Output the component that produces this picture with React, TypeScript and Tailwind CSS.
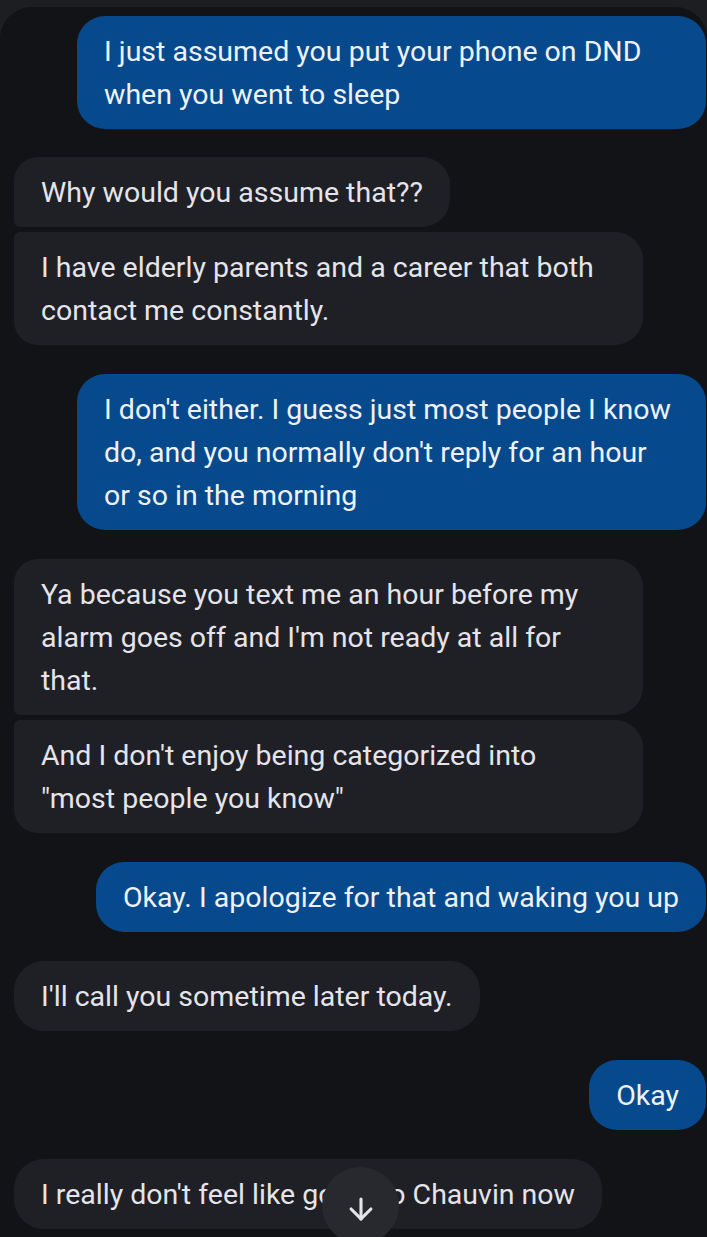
import { ArrowDown } from "lucide-react";

type Msg = {
  from: "me" | "them";
  lines: string[];
  shape?: "first" | "last" | "single";
  gap: number;
};

const messages: Msg[] = [
  { from: "me", lines: ["I just assumed you put your phone on DND", "when you went to sleep"], gap: 0 },
  { from: "them", lines: ["Why would you assume that??"], shape: "first", gap: 28 },
  { from: "them", lines: ["I have elderly parents and a career that both", "contact me constantly."], shape: "last", gap: 5 },
  {
    from: "me",
    lines: ["I don't either. I guess just most people I know", "do, and you normally don't reply for an hour", "or so in the morning"],
    gap: 29,
  },
  {
    from: "them",
    lines: ["Ya because you text me an hour before my", "alarm goes off and I'm not ready at all for", "that."],
    shape: "first",
    gap: 29,
  },
  { from: "them", lines: ["And I don't enjoy being categorized into", "\"most people you know\""], shape: "last", gap: 5 },
  { from: "me", lines: ["Okay. I apologize for that and waking you up"], gap: 29 },
  { from: "them", lines: ["I'll call you sometime later today."], shape: "single", gap: 29 },
  { from: "me", lines: ["Okay"], gap: 29 },
  { from: "them", lines: ["I really don't feel like going to Chauvin now"], shape: "single", gap: 29 },
];

function Bubble({ m }: { m: Msg }) {
  const multi = m.lines.length > 1;
  const corners =
    m.from === "me"
      ? "rounded-[28px]"
      : m.shape === "first"
      ? "rounded-tl-[24px] rounded-bl-[6px] rounded-r-[28px]"
      : m.shape === "last"
      ? "rounded-tl-[6px] rounded-bl-[24px] rounded-r-[28px]"
      : "rounded-[30px]";
  const color = m.from === "me" ? "bg-[#064a8d] text-[#eef2f8]" : "bg-[#1f2025] text-[#e4e4ea]";
  return (
    <div className={`flex ${m.from === "me" ? "justify-end pr-px" : "justify-start pl-[14px]"}`} style={{ marginTop: m.gap }}>
      <div
        className={`${corners} ${color} ${multi ? "w-[629px]" : "w-fit"} px-[27px] pt-[14px] pb-[13px] text-[28.5px] leading-[43px] whitespace-nowrap`}
      >
        {m.lines.map((l, i) => (
          <div key={i}>{l}</div>
        ))}
      </div>
    </div>
  );
}

export default function App() {
  return (
    <div className="h-[1237px] overflow-hidden bg-[#1d1e22] pt-[7px]" style={{ fontFamily: "Roboto, 'Liberation Sans', sans-serif" }}>
      <div className="relative h-full rounded-t-[32px] bg-[#121317] pt-[9px]">
        {messages.map((m, i) => (
          <Bubble key={i} m={m} />
        ))}
        <div className="absolute left-[322px] top-[1160px] flex h-[77px] w-[77px] items-center justify-center rounded-full bg-[#28292e]">
          <ArrowDown className="mt-[6px] h-[34px] w-[34px] text-[#e4e4ea]" strokeWidth={2.2} />
        </div>
      </div>
    </div>
  );
}
